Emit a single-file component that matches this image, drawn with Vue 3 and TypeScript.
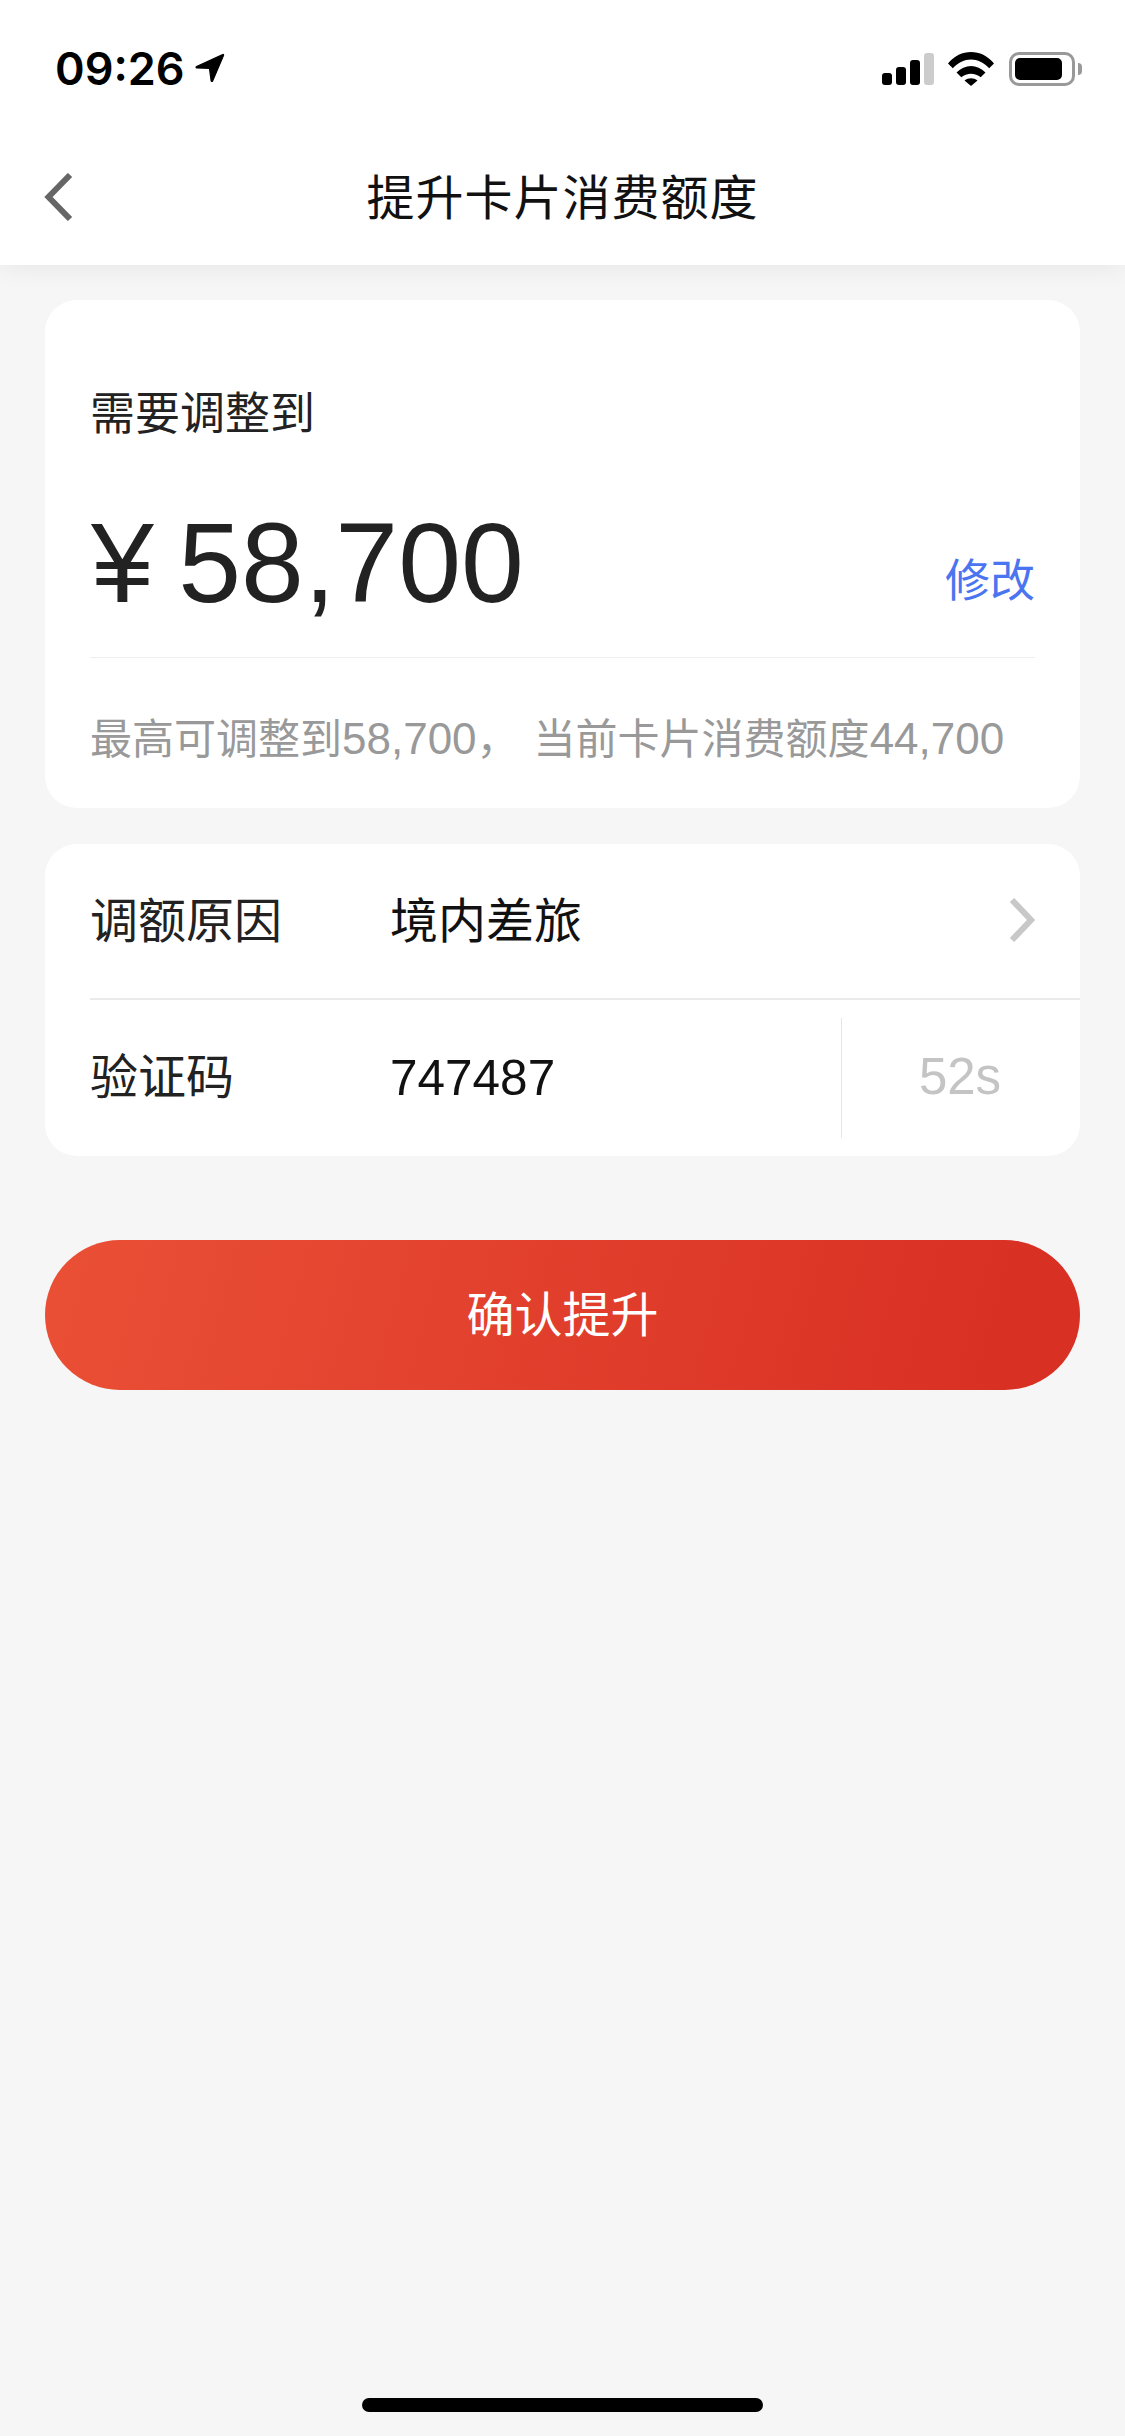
<script setup lang="ts">
import { ref } from 'vue'

const signalBars = ref([
  { height: 12, off: false },
  { height: 18, off: false },
  { height: 25, off: false },
  { height: 32, off: true }
])
</script>

<template>
  <div class="page">
    <header class="top">
      <div class="status">
        <div class="status-left">
          <span class="time">09:26</span>
          <svg class="arrow" viewBox="0 0 29 29" width="30" height="30">
            <path d="M1.500 13 26.800 1.500c.6-.3 1 .2.8.800L17 27c-.3.8-1.300.7-1.400-.2L14 14.800l-12.300-.300c-.8 0-1-1.100-.2-1.500z" fill="#000" stroke="#000" stroke-width="1.200" stroke-linejoin="round" />
          </svg>
        </div>
        <div class="status-right">
          <div class="signal">
            <i
              v-for="(bar, i) in signalBars"
              :key="i"
              :class="{ off: bar.off }"
              :style="{ height: bar.height + 'px' }"
            ></i>
          </div>
          <svg class="wifi" viewBox="0 0 46 34" width="46" height="34">
            <path d="M0 11.500C12.500-3.800 33.500-3.800 46 11.500l-4.800 4.800C30.500 4.500 15.500 4.500 4.800 16.300z" fill="#000" />
            <path d="M8.500 20.500c8.300-8.800 20.700-8.800 29 0l-4.800 4.800c-5.500-4.800-13.900-4.800-19.400 0z" fill="#000" />
            <path d="M16.500 28.500c4-3 9-3 13 0L23 34z" fill="#000" />
          </svg>
          <div class="battery">
            <div class="battery-body"><div class="battery-fill"></div></div>
            <div class="battery-nub"></div>
          </div>
        </div>
      </div>
      <nav class="nav">
        <svg class="back" viewBox="0 0 29 48" width="29" height="48">
          <path d="M26 2 4.500 24 26 46" fill="none" stroke="#666" stroke-width="6" />
        </svg>
        <h1 class="title">提升卡片消费额度</h1>
      </nav>
    </header>

    <main class="content">
      <section class="card amount-card">
        <div class="amount-label">需要调整到</div>
        <div class="amount-row">
          <span class="amount">¥ 58,700</span>
          <span class="edit">修改</span>
        </div>
        <p class="limit">
          <span>最高可调整到<span class="num">58,700</span>，</span>
          <span>当前卡片消费额度<span class="num">44,700</span></span>
        </p>
      </section>

      <section class="card form-card">
        <div class="row reason-row">
          <span class="row-label">调额原因</span>
          <span class="row-value">境内差旅</span>
          <svg class="chevron" viewBox="0 0 26 44" width="26" height="44">
            <path d="M3 2l19 20L3 42" fill="none" stroke="#c8c8c8" stroke-width="6" />
          </svg>
        </div>
        <div class="row code-row">
          <span class="row-label">验证码</span>
          <span class="row-value code">747487</span>
          <span class="countdown">52s</span>
        </div>
      </section>

      <button class="confirm" type="button"><span>确认提升</span></button>
    </main>

    <div class="home-bar"></div>
  </div>
</template>

<style>
html,
body {
  margin: 0;
  background: #f6f6f6;
}
</style>

<style scoped>
.page {
  position: relative;
  height: 2436px;
  overflow: hidden;
  background: #f6f6f6;
  font-family: "Liberation Sans", "Noto Sans CJK SC", sans-serif;
  color: #222;
}

.top {
  position: relative;
  height: 265px;
  background: #fff;
  box-shadow: 0 4px 24px rgba(0, 0, 0, 0.06);
}

.status {
  display: flex;
  justify-content: space-between;
  height: 132px;
  padding: 52px 43px 0 55px;
  box-sizing: border-box;
}

.status-left {
  display: flex;
  align-items: center;
  gap: 10px;
  height: 34px;
}

.time {
  font-family: Inter, "Liberation Sans", sans-serif;
  font-size: 45px;
  font-weight: 600;
  line-height: 34px;
  color: #000;
}

.arrow {
  margin-top: -2px;
}

.status-right {
  display: flex;
  align-items: flex-start;
}

.signal {
  display: flex;
  align-items: flex-end;
  gap: 4px;
  height: 33px;
  margin-right: 14px;
}

.signal i {
  display: block;
  width: 10px;
  border-radius: 3px;
  background: #000;
}

.signal i.off {
  background: #ccc;
}

.battery {
  display: flex;
  align-items: center;
  margin-left: 15px;
}

.battery-body {
  box-sizing: border-box;
  width: 66px;
  height: 34px;
  padding: 3px;
  border: 3px solid #999;
  border-radius: 10px;
}

.battery-fill {
  width: 47px;
  height: 22px;
  border-radius: 5px;
  background: #000;
}

.battery-nub {
  width: 4px;
  height: 12px;
  margin-left: 3px;
  border-radius: 0 4px 4px 0;
  background: #999;
}

.nav {
  display: flex;
  align-items: center;
  justify-content: center;
  position: relative;
  height: 133px;
  box-sizing: border-box;
}

.back {
  position: absolute;
  left: 44px;
  top: 41px;
}

.title {
  margin: 0;
  font-size: 48px;
  font-weight: 400;
  line-height: 64px;
  letter-spacing: 1px;
  color: #111;
}

.content {
  display: flex;
  flex-direction: column;
  padding: 35px 45px 0;
}

.card {
  border-radius: 32px;
  background: #fff;
}

.amount-card {
  display: flex;
  flex-direction: column;
  height: 508px;
  padding: 85px 45px 0 45px;
  box-sizing: border-box;
}

.amount-label {
  font-size: 45px;
  line-height: 60px;
}

.amount-row {
  display: flex;
  align-items: flex-end;
  justify-content: space-between;
  height: 190px;
  margin-top: 23px;
  padding-bottom: 34px;
  box-sizing: border-box;
  border-bottom: 1px solid #eee;
}

.amount {
  margin-left: 1px;
  font-size: 113px;
  line-height: 120px;
  word-spacing: -7px;
}

.edit {
  margin-bottom: 11px;
  font-size: 45px;
  line-height: 60px;
  color: #4a74f0;
}

.limit {
  display: flex;
  gap: 15px;
  margin: 51px 0 0;
  font-size: 42px;
  line-height: 60px;
  color: #999;
  white-space: nowrap;
}

.num {
  font-size: 44px;
}

.form-card {
  margin-top: 36px;
  height: 312px;
}

.row {
  display: flex;
  align-items: center;
  box-sizing: border-box;
  margin-left: 45px;
}

.reason-row {
  height: 156px;
  padding: 2px 45px 0 0;
  border-bottom: 2px solid #eaeaea;
}

.chevron {
  margin-top: -4px;
}

.code-row {
  height: 156px;
}

.row-label {
  width: 300px;
  font-size: 48px;
  line-height: 60px;
}

.row-value {
  flex: 1;
  font-size: 48px;
  line-height: 60px;
  color: #111;
}

.code {
  font-size: 49.5px;
}

.countdown {
  align-self: center;
  width: 239px;
  height: 120px;
  padding-right: 2px;
  box-sizing: border-box;
  border-left: 1px solid #e6e6e6;
  font-size: 51px;
  line-height: 118px;
  text-align: center;
  color: #c4c4c4;
}

.confirm {
  display: block;
  width: 100%;
  height: 150px;
  margin-top: 84px;
  padding: 0 0 8px;
  border: 0;
  border-radius: 75px;
  background: linear-gradient(105deg, #ea5036 0%, #d93024 92%);
  font-family: inherit;
  font-size: 48px;
  color: #fff;
}

.home-bar {
  position: absolute;
  left: 362px;
  bottom: 24px;
  width: 401px;
  height: 14px;
  border-radius: 7px;
  background: #000;
}
</style>
